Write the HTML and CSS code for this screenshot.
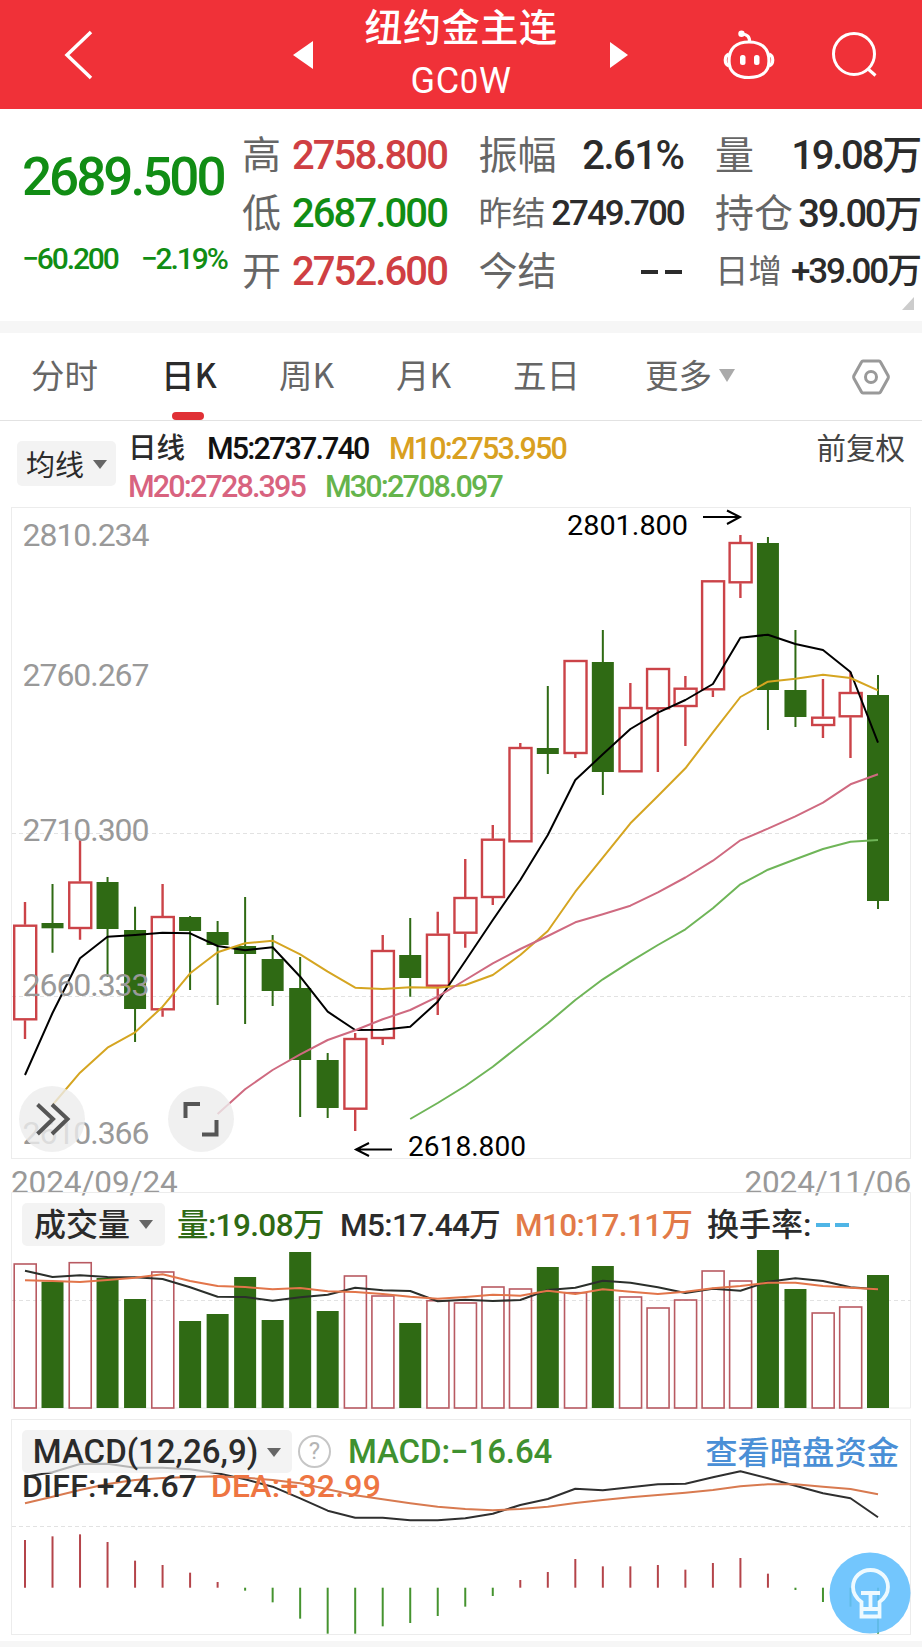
FILE: index.html
```html
<!DOCTYPE html>
<html lang="zh-CN">
<head>
  <meta charset="UTF-8">
  <meta name="viewport" content="width=device-width, initial-scale=1.0">
  <title>纽约金主连 GC0W</title>
  <link rel="stylesheet" href="styles.css">
</head>
<body>

  <header class="topbar">
    <svg class="back" width="30" height="50" viewBox="0 0 30 50"><path d="M27 2 L3 25 L27 48"/></svg>
    <svg class="prev" width="20" height="30" viewBox="0 0 20 30"><path d="M20 1 V29 L0 15 Z"/></svg>
    <div class="title">
      <h1>纽约金主连</h1>
      <p>GC<small>0</small>W</p>
    </div>
    <svg class="next" width="20" height="30" viewBox="0 0 20 30"><path d="M1 2 V28 L19 15 Z"/></svg>
    <svg class="robot" width="54" height="50" viewBox="0 0 54 50">
      <path d="M27 12 C40 12 47 19 47 31 C47 42 39 47.500 27 47.500 C15 47.500 7 42 7 31 C7 19 14 12 27 12 Z"/>
      <path d="M27.500 12 C28 7 25 4 20 4"/>
      <path d="M7 24 C2 26 2 34 7 36 M47 24 C52 26 52 34 47 36"/>
      <circle class="dot" cx="19.500" cy="3.800" r="3.200"/>
      <rect class="dot" x="18" y="25" width="5.500" height="10" rx="2.500"/>
      <rect class="dot" x="32" y="25" width="5.500" height="10" rx="2.500"/>
    </svg>
    <svg class="search" width="46" height="46" viewBox="0 0 46 46"><circle cx="22" cy="22" r="20.500"/><path d="M35.500 36.500 L43.500 43.500"/></svg>
  </header>

  <section class="quote">
    <div class="price">
      <div class="last">2689.500</div>
      <div class="change"><span>−60.200</span><span>−2.19%</span></div>
    </div>
    <dl class="stats">
      <div><dt>高</dt><dd class="up">2758.800</dd></div>
      <div><dt>振幅</dt><dd class="pct">2.61%</dd></div>
      <div><dt>量</dt><dd class="wan">19.08万</dd></div>
      <div><dt>低</dt><dd class="down">2687.000</dd></div>
      <div><dt class="sm">昨结</dt><dd class="sm">2749.700</dd></div>
      <div><dt>持仓</dt><dd class="wan md">39.00万</dd></div>
      <div><dt>开</dt><dd class="up">2752.600</dd></div>
      <div><dt>今结</dt><dd class="none"><i></i><i></i></dd></div>
      <div><dt class="sm">日增</dt><dd class="sm">+39.00万</dd></div>
    </dl>
    <svg class="corner" width="12" height="13" viewBox="0 0 12 13"><path d="M12 0 V13 H0 Z"/></svg>
  </section>

  <nav class="tabs">
    <a>分时</a>
    <a class="active">日K</a>
    <a>周K</a>
    <a>月K</a>
    <a>五日</a>
    <a>更多<b class="caret big"></b></a>
    <svg width="38" height="36" viewBox="0 0 38 36"><path d="M11 2 H27 Q28 2 28.500 3 L36 16.500 Q36.700 18 36 19.500 L28.500 33 Q28 34 27 34 H11 Q10 34 9.500 33 L2 19.500 Q1.300 18 2 16.500 L9.500 3 Q10 2 11 2 Z"/><circle cx="19" cy="18" r="5.500"/></svg>
  </nav>

  <section class="legend">
    <button class="pick">均线<b class="caret"></b></button>
    <div class="ma">
      <p><span class="period">日线</span><span class="m5">M5:2737.740</span><span class="m10">M10:2753.950</span></p>
      <p><span class="m20">M20:2728.395</span><span class="m30">M30:2708.097</span></p>
    </div>
    <span class="adjust">前复权</span>
  </section>

  <svg id="kline" class="chart" width="922" height="652" viewBox="0 507 922 652">
    <rect class="frame" x="11.500" y="507.500" width="899" height="651"/>
    <path class="grid" d="M12 833.500 H911 M12 996.500 H911"/>
    <g class="plot"></g>
    <g class="axis">
      <text x="22.500" y="546" textLength="127">2810.234</text>
      <text x="22.500" y="686" textLength="127">2760.267</text>
      <text x="22.500" y="841" textLength="127">2710.300</text>
      <text x="22.500" y="996" textLength="127">2660.333</text>
      <text x="22.500" y="1143.500" textLength="127">2610.366</text>
    </g>
    <g class="mark">
      <text x="567" y="535" textLength="121" lengthAdjust="spacingAndGlyphs">2801.800</text>
      <path d="M703 517 H740 M727 510.500 L740 517 L727 524"/>
      <text x="408" y="1156" textLength="118" lengthAdjust="spacingAndGlyphs">2618.800</text>
      <path d="M392 1149.500 H356 M369 1143 L356 1149.500 L369 1156"/>
    </g>
    <g class="tool">
      <circle cx="52" cy="1119" r="33"/>
      <path d="M37.500 1104.500 L53 1119 L37.500 1134 M52 1104.500 L67.500 1119 L52 1134"/>
      <circle cx="201" cy="1119" r="33"/>
      <path d="M185.500 1118 V1104 H200 M202 1134.500 H216.500 V1120"/>
    </g>
  </svg>

  <div class="dates"><span>2024/09/24</span><span>2024/11/06</span></div>

  <section class="panel">
    <svg id="volume" class="chart" width="922" height="227" viewBox="0 1192 922 227">
      <path class="frame" d="M11.500 1408 V1192.500 H910.500 V1408 Z"/>
      <path class="grid" d="M12 1300.500 H911"/>
      <g class="plot"></g>
    </svg>
    <div class="vol-head">
      <button class="pick">成交量<b class="caret"></b></button>
      <span class="v0">量:19.08万</span>
      <span class="v5">M5:17.44万</span>
      <span class="v10">M10:17.11万</span>
      <span class="turn">换手率:<i></i><i></i></span>
    </div>
  </section>

  <section class="panel">
    <svg id="macd" class="chart" width="922" height="222" viewBox="0 1419 922 222">
      <rect class="frame" x="11.500" y="1419.500" width="899" height="215"/>
      <path class="grid" d="M12 1526.500 H911"/>
      <g class="plot"></g>
    </svg>
    <div class="macd-head">
      <div class="row">
        <button class="pick">MACD(12,26,9)<b class="caret"></b></button>
        <span class="help">?</span>
        <span class="value">MACD:−16.64</span>
        <a class="link">查看暗盘资金</a>
      </div>
      <div class="row second">
        <span class="diff">DIFF:+24.67</span>
        <span class="dea">DEA:+32.99</span>
      </div>
    </div>
  </section>

  <footer class="strip"></footer>

  <svg class="bulb" width="82" height="82" viewBox="0 0 82 82">
    <circle class="bg" cx="41" cy="41" r="40.500"/>
    <path d="M32.500 50 C27 46 24 41 24 35 C24 25 32 18 41.500 18 C51 18 59 25 59 35 C59 41 56 46 50.500 50 V64.500 H32.500 Z M32.500 57 H50 M32 41 H51 M41.500 41 V56"/>
  </svg>

  <script src="chart.js"></script>
</body>
</html>
```
FILE: styles.css
```css
* {
  box-sizing: border-box;
}

body {
  margin: 0;
  width: 922px;
  background-color: #fff;
  color: #2b2b2b;
  font-family: Roboto, "Noto Sans CJK SC", sans-serif;
  font-weight: 500;
  overflow-x: hidden;
}

h1, p, dl, dd {
  margin: 0;
}

/* top bar */
.topbar {
  display: flex;
  align-items: center;
  height: 109px;
  background-color: #f03138;
  color: #fff;
}

.topbar svg {
  fill: none;
  stroke: #fff;
  stroke-width: 3.5;
  flex: none;
}

.topbar .back {
  margin-left: 64px;
}

.topbar .prev,
.topbar .next {
  fill: #fff;
  stroke: none;
}

.topbar .prev {
  margin-left: 199px;
}

.title {
  width: 296px;
  text-align: center;
}

.title h1 {
  font-size: 38px;
  line-height: 54px;
  font-weight: 500;
  letter-spacing: 0.6px;
}

.title p {
  font-size: 36px;
  line-height: 52px;
  font-weight: 400;
  letter-spacing: 0.6px;
}

.title small {
  font-size: 33px;
}

.topbar .robot {
  margin-left: 93px;
  stroke-width: 3.2;
}

.topbar .robot .dot {
  fill: #fff;
  stroke: none;
}

.topbar .search {
  margin-left: 56px;
  stroke-width: 3;
}

/* quote */
.quote {
  display: flex;
  position: relative;
  height: 212px;
}

.price {
  width: 242px;
  padding: 37px 0 0 22px;
  color: #118d14;
}

.last {
  font-size: 53px;
  line-height: 62px;
  letter-spacing: -3px;
}

.change {
  display: flex;
  gap: 23px;
  margin-top: 33px;
  font-size: 30px;
  line-height: 36px;
  letter-spacing: -2.1px;
  white-space: nowrap;
}

.stats {
  display: grid;
  grid-template-columns: 205px 205px 205px;
  grid-template-rows: repeat(3, 58px);
  column-gap: 31.5px;
  padding-top: 18px;
}

.stats div {
  display: flex;
  justify-content: space-between;
  align-items: center;
  white-space: nowrap;
}

.stats dt {
  color: #666;
  font-size: 39px;
  font-weight: 400;
  line-height: 58px;
}

.stats dd {
  font-size: 40px;
  line-height: 58px;
  letter-spacing: -1.9px;
}

.stats dd.pct {
  letter-spacing: -1.5px;
}

.stats dt.sm {
  font-size: 33.5px;
}

.stats dd.wan {
  letter-spacing: -2.2px;
}

.stats dd.md {
  font-size: 38px;
}

.stats dd.sm {
  font-size: 35px;
  letter-spacing: -2.1px;
}

.stats .up {
  color: #cf3f43;
}

.stats .down {
  color: #118d14;
}

.stats .none {
  display: flex;
  gap: 7px;
  padding-right: 2px;
}

.none i {
  width: 17px;
  height: 4px;
  background-color: #2b2b2b;
}

.corner {
  position: absolute;
  right: 8px;
  bottom: 11px;
  fill: #ccc;
}

/* tabs */
.tabs {
  display: grid;
  grid-template-columns: 130px 118px 117px 117px 132px 207px 38px;
  align-items: center;
  height: 100px;
  padding-left: 31px;
  border-top: 12px solid #f6f6f6;
  border-bottom: 1px solid #e2e2e2;
  font-family: "Noto Sans CJK SC", sans-serif;
  font-size: 33.5px;
  font-weight: 400;
  color: #666;
}

.tabs a {
  position: relative;
  height: 87px;
  line-height: 82px;
}

.tabs .active {
  font-weight: 500;
  color: #2b2b2b;
}

.tabs .active::after {
  content: "";
  position: absolute;
  left: 11px;
  bottom: 0;
  width: 32px;
  height: 8px;
  border-radius: 4px;
  background-color: #e03035;
}

.tabs svg {
  fill: none;
  stroke: #999;
  stroke-width: 3;
}

.caret {
  display: inline-block;
  margin-left: 9px;
  vertical-align: 7px;
  border: 7px solid transparent;
  border-top: 9px solid #666;
  border-bottom: 0;
}

.caret.big {
  margin-left: 7px;
  vertical-align: 6px;
  border-width: 13px 8px 0;
  border-top-color: #aaa;
}

/* moving average legend */
.legend {
  display: flex;
  align-items: flex-start;
  height: 86px;
  padding: 9px 17px 0;
  font-size: 30.5px;
  white-space: nowrap;
}

.pick {
  padding: 0;
  border: none;
  border-radius: 5px;
  background-color: rgba(238, 238, 238, 0.7);
  color: #2b2b2b;
  font: inherit;
  white-space: nowrap;
}

.legend .pick {
  width: 99px;
  height: 45px;
  margin-top: 11px;
  padding-bottom: 2px;
  font-size: 29px;
  font-weight: 400;
}

.ma {
  padding-left: 12px;
  letter-spacing: -1.85px;
}

.ma p {
  display: flex;
  height: 38px;
  line-height: 38px;
}

.period {
  width: 79px;
  font-size: 28.5px;
  letter-spacing: 0;
}

.m5 {
  width: 182px;
  color: #111;
}

.m10 {
  color: #d9a021;
}

.m20 {
  width: 197px;
  color: #d8637f;
}

.m30 {
  color: #65b44c;
}

.adjust {
  margin-left: auto;
  font-size: 29.5px;
  font-weight: 400;
  line-height: 38px;
  color: #444;
}

/* charts */
.chart {
  display: block;
  fill: none;
  overflow: visible;
}

.frame {
  stroke: #ececec;
}

.grid {
  stroke: #e2e2e2;
  stroke-dasharray: 4 3;
}

.axis {
  fill: #999;
  font-size: 32px;
  font-weight: 400;
}

.mark text {
  fill: #000;
  font-size: 27px;
  font-weight: 400;
}

.mark path {
  stroke: #000;
  stroke-width: 2;
}

.tool circle {
  fill: #ececec;
  fill-opacity: 0.8;
}

.tool path {
  stroke: #555;
  stroke-width: 4;
}

.rise {
  stroke: #cb4348;
  stroke-width: 2.4;
}

.fall {
  stroke: #2f6a14;
  stroke-width: 2;
}

rect.fall {
  fill: #2f6a14;
  stroke: none;
}

rect.thin {
  stroke: #b85a62;
  stroke-width: 1.6;
}

.line {
  stroke-width: 2;
  stroke-linejoin: round;
}

.dates {
  display: flex;
  justify-content: space-between;
  height: 33px;
  padding: 0 11px 0 11px;
  font-size: 31.5px;
  font-weight: 400;
  line-height: 47px;
  letter-spacing: -0.1px;
  color: #999;
}

.panel {
  display: grid;
}

.panel > * {
  grid-area: 1 / 1;
}

.vol-head {
  display: flex;
  align-items: flex-start;
  height: 54px;
  padding: 11px 0 0 22px;
  font-size: 31.5px;
  line-height: 45px;
  letter-spacing: -0.6px;
  white-space: nowrap;
}

.vol-head .pick {
  width: 143px;
  height: 43px;
  margin-right: 12px;
  font-size: 32px;
  letter-spacing: 0;
}

.v0 {
  width: 163px;
  color: #2f6a14;
}

.v5 {
  width: 175px;
}

.v10 {
  width: 192px;
  color: #e27a48;
}

.turn {
  font-size: 32px;
  letter-spacing: 0;
}

.turn i {
  display: inline-block;
  width: 14px;
  height: 4px;
  margin-left: 5px;
  vertical-align: 9px;
  background-color: #4fb5e6;
}

.macd-head {
  padding: 11px 23px 0 22px;
  font-size: 33px;
  white-space: nowrap;
}

.row {
  display: flex;
  align-items: center;
  height: 43px;
}

.macd-head .pick {
  width: 270px;
  height: 43px;
}

.macd-head .caret {
  vertical-align: 6px;
}

.help {
  width: 33px;
  height: 33px;
  margin: 0 17px 0 6px;
  border: 2.5px solid #c6c6c6;
  border-radius: 50%;
  color: #b4b4b4;
  font-size: 24px;
  font-weight: 400;
  line-height: 28px;
  text-align: center;
}

.value {
  letter-spacing: -0.1px;
  color: #3f9130;
}

.link {
  margin-left: auto;
  padding-bottom: 4px;
  font-size: 32.3px;
  color: #4a8fd6;
}

.second {
  height: 26px;
  font-size: 32px;
  letter-spacing: 0.2px;
}

.diff {
  width: 189px;
}

.dea {
  color: #ee7542;
}

.strip {
  height: 6px;
  background-color: #f6f6f6;
}

.bulb {
  position: fixed;
  left: 829px;
  top: 1552px;
  fill: none;
  stroke: #eefaff;
  stroke-width: 3.8;
}

.bulb .bg {
  fill: #64c0fd;
  fill-opacity: 0.9;
  stroke: none;
}
```
FILE: chart.js
```js
const STEP = 27.516;
const FIRST = 25;

// [rising, high, body top, body bottom, low]
const candles = [
  [1, 902, 924.7, 1020.3, 1039], [0, 884, 923, 928.3, 952.7], [1, 840, 881.5, 929, 939.7],
  [0, 877, 882, 929, 976.7], [0, 906.7, 930, 1009, 1042], [1, 884, 916, 1010.3, 1016.7],
  [0, 916, 917, 931, 990], [0, 921, 932, 945, 1005], [0, 897, 946, 954, 1024],
  [0, 935, 959, 991, 1006], [0, 957, 988, 1060, 1117], [0, 1053, 1060, 1108, 1118],
  [1, 1033, 1038, 1109.7, 1131], [1, 935, 950, 1039, 1045], [0, 918, 955, 978, 996.7],
  [1, 911.7, 933.7, 986.7, 1015], [1, 859, 897, 933.7, 947.7], [1, 825, 838.7, 898, 905],
  [1, 743, 747, 842.3, 842.3], [0, 686, 748, 754, 774], [1, 660, 660, 754, 758],
  [0, 630, 662, 772, 795], [1, 683, 707, 772.3, 772.3], [1, 668, 668, 709.3, 772],
  [1, 676, 687.7, 707, 746], [1, 580, 580.3, 690.3, 697], [1, 535, 542, 583.3, 598],
  [0, 537, 543, 690, 730], [0, 630, 690, 717, 727], [1, 679, 716.7, 726, 738],
  [1, 672, 692, 717.3, 758], [0, 675, 695, 901, 909]
];

const ma5 = [1075, 1013, 958.3, 936.7, 935, 932.7, 933.3, 946, 950.3, 947.3, 976.7, 1011.7, 1030, 1029.7, 1026.7, 1001.7,
  961, 920, 880, 835, 780, 754.3, 729, 712.7, 700, 684, 637.7, 634.7, 644, 650, 672, 742.7];
const ma10 = [1105, 1072.7, 1047.7, 1032.3, 1006.7, 973.3, 952.3, 943.3, 940.7, 954.3, 971.7, 987.7, 989, 987.3, 987.7,
  985, 975, 955, 931, 891.7, 857.7, 823.3, 796, 768.3, 732.3, 697, 681.7, 678.7, 674.7, 678, 690.3];
const ma20 = [1114, 1089.3, 1070, 1054.3, 1040, 1030.3, 1019.3, 1010, 996.7, 980, 963.3, 949, 936, 922.3, 914.3, 905.7,
  892.3, 877.5, 860.7, 840.3, 828.7, 816.3, 802.7, 784.3, 774.3];
const ma30 = [1119, 1103, 1086, 1066.7, 1045, 1023.3, 1000, 979.3, 961.7, 945, 929.3, 908.3, 884.3, 869.7, 859.3, 849, 841.7, 840];

const volumes = [1263, 1281.7, 1261.7, 1278, 1299, 1271, 1321, 1314, 1277, 1320, 1252, 1311, 1275, 1295, 1323, 1299.7,
  1302, 1286, 1288, 1267, 1291.7, 1266, 1296, 1307, 1299, 1270, 1280, 1250, 1289, 1312, 1306, 1275];
const vol5 = [212, 231, 226, 231, 232, 237, 262, 290, 291, 302, 292, 284, 263, 271, 273, 304,
  299, 303, 300, 270, 263, 242, 248, 262, 279, 266, 272, 245, 235, 243, 262, 268];
const vol10 = [241, 243, 246, 240, 233, 223, 243, 258, 261, 268, 264, 274, 276, 282, 290, 296,
  291, 284, 287, 272, 282, 268, 275, 282, 275, 265, 258, 248, 248, 258, 263, 268];

const bars = [390, 379, 373, 396, 452, 465, 488, 516, 542, 577, 626, 671, 671, 649, 639, 618,
  590, 558, 510, 486, 447, 469, 469, 465, 479, 459, 444, 491, 540, 576, 590, 671];
const diff = [200, 187, 162, 161, 173, 173, 178, 190, 208, 230, 265, 302, 323, 323, 331, 331,
  325, 311, 285, 267, 236, 241, 232, 223, 221, 202, 184, 205, 227, 250, 265, 322];
const dea = [280, 260, 240, 222, 210, 204, 201, 199, 203, 210, 220, 238, 256, 268, 280, 290,
  297, 301, 297, 290, 279, 270, 262, 255, 248, 240, 229, 223, 223, 230, 237, 253];

const xAt = i => FIRST + i * STEP;

function line(values, color, start = 0) {
  const points = values.map((y, i) => `${xAt(i + start).toFixed(1)},${y.toFixed(1)}`).join(' ');
  return `<polyline class="line" stroke="${color}" points="${points}"/>`;
}

function box(x, top, bottom, rising, thin) {
  if (!rising) {
    return `<rect class="fall" x="${x - 11}" y="${top}" width="22" height="${bottom - top}"/>`;
  }
  return `<rect class="rise ${thin}" x="${x - 10.8}" y="${top + 1}" width="22" height="${bottom - top - 2}"/>`;
}

function draw(id, html) {
  document.querySelector(`#${id} .plot`).innerHTML = html;
}

// Candles and averages
let html = '';
candles.forEach(([rising, high, top, bottom, low], i) => {
  const x = xAt(i);
  html += `<path class="${rising ? 'rise' : 'fall'}" d="M${x} ${high} V${top} M${x} ${bottom} V${low}"/>`;
  html += box(x, top, bottom, rising, '');
});
html += line(ma5, '#000') + line(ma10, '#d5a521', 1) + line(ma20, '#cf6a80', 7) + line(ma30, '#6fb558', 14);
draw('kline', html);

// Volume
html = '';
volumes.forEach((top, i) => {
  html += box(xAt(i), top, candles[i][0] ? 1409 : 1408, candles[i][0], 'thin');
});
html += line(vol5.map(v => 1200 + v / 3), '#2b2f2b') + line(vol10.map(v => 1200 + v / 3), '#e2754a');
draw('volume', html);

// MACD
const zero = 1587.7;
html = '';
bars.forEach((v, i) => {
  const y = 1410 + v / 3;
  html += `<path stroke="${y < zero ? '#b4444a' : '#45932f'}" stroke-width="2" d="M${xAt(i)} ${zero} V${y}"/>`;
});
html += line(diff.map(v => 1410 + v / 3), '#2f2f2f') + line(dea.map(v => 1410 + v / 3), '#d87a50');
draw('macd', html);
```
